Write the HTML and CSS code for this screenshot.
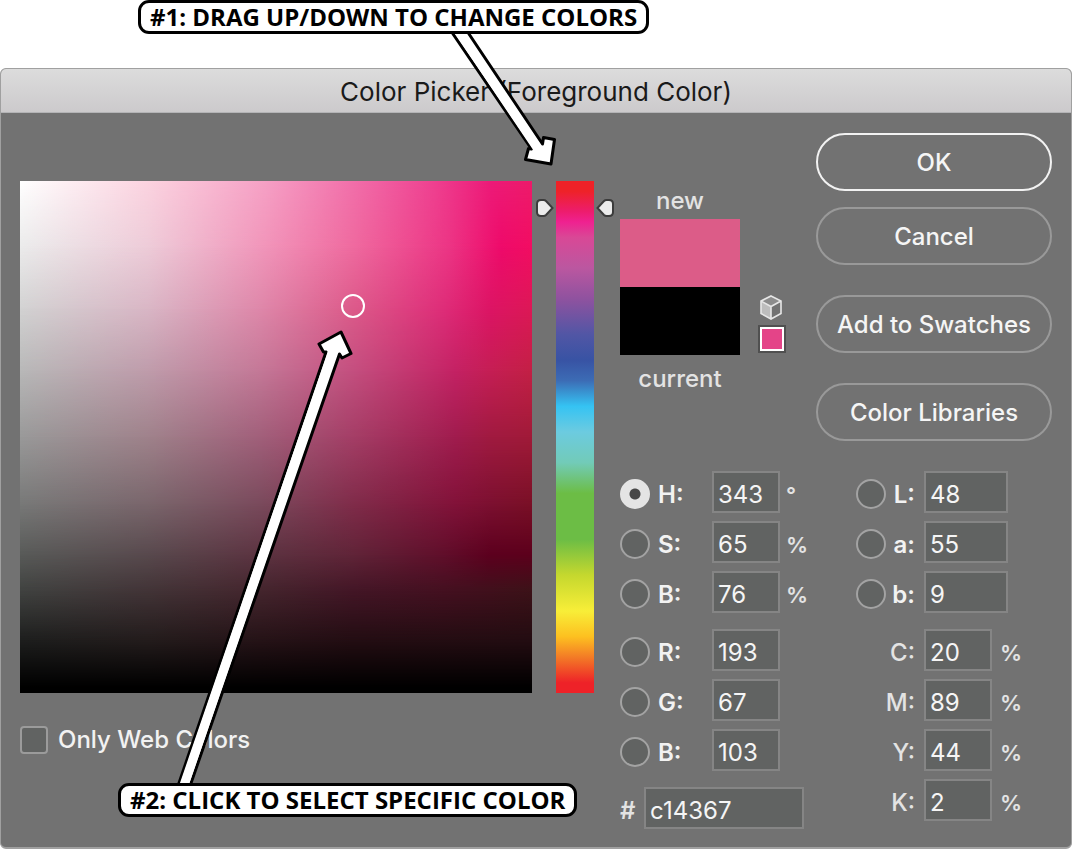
FILE: index.html
```html
<!DOCTYPE html>
<html lang="en">
<head>
  <meta charset="UTF-8">
  <title>Color Picker</title>
  <link rel="stylesheet" href="styles.css">
</head>
<body>
  <div class="callout callout-hue">#1: DRAG UP/DOWN TO CHANGE COLORS</div>

  <main class="dialog">
    <h1 class="titlebar">Color Picker (Foreground Color)</h1>

    <form class="content">
      <section class="spectrum">
        <div class="field">
          <div class="shade shade-0"></div>
          <div class="shade shade-1"></div>
          <div class="shade shade-2"></div>
          <div class="shade shade-3"></div>
          <div class="shade shade-4"></div>
          <div class="shade shade-5"></div>
          <div class="shade shade-6"></div>
          <div class="shade shade-7"></div>
          <div class="shade shade-8"></div>
          <div class="shade shade-9"></div>
          <span class="cursor"></span>
        </div>
        <label class="web-only"><input type="checkbox" class="check">Only Web Colors</label>
        <svg class="arrow arrow-field" width="180" height="460" viewBox="175 328 180 460">
          <path d="M178 786 L326 352 L323.5 352 L319 344 L341 332 L351 353.5 L342 358 L339.5 354 L190 786"/>
          <path class="core" d="M183 788 L334 348"/>
        </svg>
      </section>

      <section class="hue">
        <svg class="marker" width="18" height="20" viewBox="0 0 18 20">
          <path d="M5 1 H7.5 Q9 1 10 2 L16.5 9 L10 16 Q9 17 7.5 17 H5 Q1 17 1 13 V5 Q1 1 5 1Z"/>
        </svg>
        <div class="strip"></div>
        <svg class="marker" width="18" height="20" viewBox="0 0 18 20">
          <path d="M13 1 H10.5 Q9 1 8 2 L1.5 9 L8 16 Q9 17 10.5 17 H13 Q17 17 17 13 V5 Q17 1 13 1Z"/>
        </svg>
      </section>

      <section class="panel">
        <div class="top">
          <div class="preview">
            <span class="caption">new</span>
            <div class="swatches">
              <div class="swatch-new"></div>
              <div class="swatch-current"></div>
            </div>
            <span class="caption">current</span>
          </div>
          <div class="warnings">
            <svg width="24" height="26" viewBox="1 1 24 26">
              <path d="M12 2 L22 7 L12 12.500 L2 7Z" fill="#8c8c8c"/>
              <path d="M2 7 L12 12.5 V25 L2 19.5Z" fill="#bdbdbd"/>
              <path d="M12 2 L22 7 V19.5 L12 25 L2 19.5 V7Z M2 7 L12 12.5 L22 7 M12 12.5 V25" fill="none" stroke="#e6e6e6" stroke-width="1.6"/>
            </svg>
            <span class="web-swatch"></span>
          </div>
          <div class="actions">
            <button type="button" class="primary">OK</button>
            <button type="button">Cancel</button>
            <button type="button" class="spaced">Add to Swatches</button>
            <button type="button" class="spaced">Color Libraries</button>
          </div>
        </div>

        <div class="values">
          <div class="column">
            <div class="group">
              <div class="row"><input type="radio" name="mode" id="mode-h" checked><label for="mode-h">H:</label><input type="text" value="343" aria-label="Hue"><span class="unit">°</span></div>
              <div class="row"><input type="radio" name="mode" id="mode-s"><label for="mode-s">S:</label><input type="text" value="65" aria-label="Saturation"><span class="unit">%</span></div>
              <div class="row"><input type="radio" name="mode" id="mode-v"><label for="mode-v">B:</label><input type="text" value="76" aria-label="Brightness"><span class="unit">%</span></div>
            </div>
            <div class="group">
              <div class="row"><input type="radio" name="mode" id="mode-r"><label for="mode-r">R:</label><input type="text" value="193" aria-label="Red"></div>
              <div class="row"><input type="radio" name="mode" id="mode-g"><label for="mode-g">G:</label><input type="text" value="67" aria-label="Green"></div>
              <div class="row"><input type="radio" name="mode" id="mode-b"><label for="mode-b">B:</label><input type="text" value="103" aria-label="Blue"></div>
            </div>
            <div class="row hex"><label for="hex">#</label><input type="text" id="hex" value="c14367"></div>
          </div>

          <div class="column column-right">
            <div class="group lab">
              <div class="row"><input type="radio" name="mode" id="mode-l"><label for="mode-l">L:</label><input type="text" value="48" aria-label="Lightness"></div>
              <div class="row"><input type="radio" name="mode" id="mode-la"><label for="mode-la">a:</label><input type="text" value="55" aria-label="a"></div>
              <div class="row"><input type="radio" name="mode" id="mode-lb"><label for="mode-lb">b:</label><input type="text" value="9" aria-label="b"></div>
            </div>
            <div class="group cmyk">
              <div class="row"><label for="c">C:</label><input type="text" id="c" value="20"><span class="unit">%</span></div>
              <div class="row"><label for="m">M:</label><input type="text" id="m" value="89"><span class="unit">%</span></div>
              <div class="row"><label for="y">Y:</label><input type="text" id="y" value="44"><span class="unit">%</span></div>
              <div class="row"><label for="k">K:</label><input type="text" id="k" value="2"><span class="unit">%</span></div>
            </div>
          </div>
        </div>
      </section>
    </form>
  </main>

  <svg class="arrow arrow-hue" width="120" height="140" viewBox="445 30 120 140">
    <path d="M451 31 L531.5 149 L528.5 148.5 L525.5 159.5 L551 164 L554.5 139.5 L543.5 137.5 L542.5 144 L467 31"/>
    <path class="core" d="M458 30 L540 152"/>
  </svg>
  <div class="callout callout-field">#2: CLICK TO SELECT SPECIFIC COLOR</div>
</body>
</html>
```

FILE: styles.css
```css
* {
  box-sizing: border-box;
}
body {
  margin: 0;
  position: relative;
  background: #fff;
  color: #f2f2f2;
  font-family: Inter, sans-serif;
  font-size: 24px;
  font-weight: 500;
  line-height: 30px;
}

/* annotations */
.callout {
  position: absolute;
  z-index: 3;
  height: 34px;
  padding: 0 9px;
  border: 3px solid #000;
  border-radius: 11px;
  background: #fff;
  color: #000;
  font-family: "Open Sans", sans-serif;
  font-size: 24px;
  font-weight: 700;
  line-height: 28px;
  white-space: nowrap;
}
.callout-hue {
  left: 138px;
  top: 0;
}
.callout-field {
  left: 118px;
  top: 783px;
}
.arrow {
  position: absolute;
  z-index: 2;
  fill: #fff;
  stroke: #000;
  stroke-width: 3;
  stroke-linejoin: round;
  pointer-events: none;
}
.arrow .core {
  stroke: #fff;
  stroke-width: 9;
}
.arrow-hue {
  left: 445px;
  top: 30px;
}
.arrow-field {
  left: 155px;
  top: 195px;
}

/* window */
.dialog {
  margin-top: 68px;
  border: 1px solid #a0a0a0;
  border-bottom-width: 2px;
  border-radius: 6px;
  background: #727272;
}
.titlebar {
  margin: 0;
  height: 44px;
  border-bottom: 1px solid #b4b4b6;
  border-radius: 5px 5px 0 0;
  background: linear-gradient(#dcdcdc, #cccacc);
  color: #1a1a1a;
  font-size: 26px;
  font-weight: 400;
  line-height: 46px;
  text-align: center;
}
.content {
  display: flex;
  align-items: flex-start;
  padding: 20px 19px 18px;
}

/* saturation / brightness field */
.spectrum {
  position: relative;
  flex: 1;
  padding-top: 48px;
}
.field {
  position: relative;
  aspect-ratio: 1;
}
.shade {
  position: absolute;
  inset: 0;
}
.shade-0 {
  background: linear-gradient(90deg, #fff, #fcd3e0 25%, #f6a0c5 48%, #f26faa 65%, #ef4090 81%, #ed1a78 92%, #ed1b6a);
}
.shade-1 {
  background: linear-gradient(90deg, #ebebeb, #edcbd8 25%, #f194b9 48%, #ef6a9f 65%, #ec3484 84%, #ee0a6a 94%, #f20d62);
  mask-image: linear-gradient(transparent, #000 13%);
}
.shade-2 {
  background: linear-gradient(90deg, #d2d2d2, #d9b6c5 25%, #de87a9 47%, #dc5a8a 65%, #de2c78 83%, #dc1464 92%, #dc1856);
  mask-image: linear-gradient(transparent 13%, #000 25%);
}
.shade-3 {
  background: linear-gradient(90deg, #b8b8b8, #bf9cab 25%, #c47897 47%, #c44f7f 65%, #c42264 85%, #c51e54 92%, #c32045);
  mask-image: linear-gradient(transparent 25%, #000 37%);
}
.shade-4 {
  background: linear-gradient(90deg, #999, #9f828b 25%, #a15f7a 47%, #a43e66 65%, #a01c4e 85%, #a01a40 92%, #a01a38);
  mask-image: linear-gradient(transparent 37%, #000 50%);
}
.shade-5 {
  background: linear-gradient(90deg, #787978, #7a666c 25%, #7a4a5c 47%, #802c4a 65%, #821239 85%, #7c1030 92%, #7a1026);
  mask-image: linear-gradient(transparent 50%, #000 63%);
}
.shade-6 {
  background: linear-gradient(90deg, #585a58, #58494d 25%, #5b3743 43%, #602438 65%, #600e2a 83%, #5c001e 92%, #5c001c);
  mask-image: linear-gradient(transparent 63%, #000 73%);
}
.shade-7 {
  background: linear-gradient(90deg, #404240, #423437 25%, #44252d 47%, #431626 65%, #441020 83%, #40101c 92%, #3c1218);
  mask-image: linear-gradient(transparent 73%, #000 80%);
}
.shade-8 {
  background: linear-gradient(90deg, #1c1d1c, #221b1b 25%, #241216 47%, #220d12 65%, #220c11);
  mask-image: linear-gradient(transparent 80%, #000 90%);
}
.shade-9 {
  background: #000;
  mask-image: linear-gradient(transparent 90%, #000 99%);
}
.cursor {
  position: absolute;
  left: 321px;
  top: 113px;
  width: 24px;
  height: 24px;
  border: 2px solid #fff;
  border-radius: 50%;
}
.web-only {
  display: flex;
  align-items: center;
  gap: 10px;
  margin-top: 32px;
}
.check {
  appearance: none;
  width: 28px;
  height: 28px;
  margin: 0;
  border: 2px solid #9b9b9b;
  border-radius: 4px;
  background: #616362;
}

/* hue slider */
.hue {
  display: flex;
  gap: 2px;
  margin: 48px 6px 0 4px;
}
.marker {
  margin-top: 18px;
  fill: #ececec;
  stroke: #3c3c3c;
  stroke-width: 2;
}
.strip {
  width: 38px;
  height: 512px;
  background: linear-gradient(#ee2228 2%, #ed1c6e 6%, #ef2190 8%, #d94896 11%, #bb57a0 17%, #8f529f 23%, #5156a5 30%, #3853a4 35%, #3c6cb5 39%, #35c3f3 44%, #6ccbe0 49%, #72cbb8 55%, #6cbd45 61%, #6cbd45 70%, #c5d82e 77%, #f8ee38 84%, #fdc020 89%, #f37b26 93%, #ee2228 98%);
}

/* preview, buttons and values */
.panel {
  width: 432px;
}
.top {
  display: flex;
  align-items: flex-start;
}
.preview {
  display: flex;
  flex-direction: column;
  gap: 3px;
  width: 120px;
  padding-top: 53px;
  text-align: center;
}
.caption {
  color: #e3e3e3;
}
.swatches {
  margin-bottom: 6px;
}
.swatch-new,
.swatch-current {
  height: 68px;
}
.swatch-new {
  background: #dc5c88;
}
.swatch-current {
  background: #000;
}
.warnings {
  display: flex;
  flex-direction: column;
  align-items: center;
  gap: 4px;
  width: 28px;
  margin: 162px 0 0 18px;
}
.web-swatch {
  width: 28px;
  height: 28px;
  border: 2px solid #505050;
  background: #e44488;
  box-shadow: inset 0 0 0 2px #fff;
}
.actions {
  flex: 1;
  display: flex;
  flex-direction: column;
  gap: 16px;
  margin-left: 30px;
}
button {
  height: 58px;
  padding: 2px 0 0;
  border: 2px solid #999;
  border-radius: 29px;
  background: none;
  color: #f5f5f5;
  font: inherit;
}
.primary {
  border-color: #f2f2f2;
}
.spaced {
  margin-top: 14px;
}
.values {
  display: flex;
  margin-top: 30px;
}
.column {
  display: flex;
  flex-direction: column;
  gap: 16px;
  width: 236px;
}
.column-right {
  width: 196px;
}
.group {
  display: flex;
  flex-direction: column;
  gap: 8px;
}
.row {
  display: flex;
  align-items: center;
}
.row label {
  width: 62px;
  margin-top: 6px;
  padding-left: 8px;
  font-weight: 600;
}
input[type="radio"] {
  appearance: none;
  width: 30px;
  height: 30px;
  margin: 4px 0 0;
  border: 2px solid #a3a3a3;
  border-radius: 50%;
  background: #616362;
}
input[type="radio"]:checked {
  border-color: #e4e4e4;
  background: radial-gradient(circle, #484848 5px, #e4e4e4 6px);
}
input[type="text"] {
  width: 68px;
  height: 42px;
  padding: 5px 4px 0;
  border: 2px solid #858585;
  border-radius: 0;
  background: #616362;
  color: #f5f5f5;
  font: inherit;
  font-weight: 400;
}
.unit {
  margin-top: 6px;
  padding-left: 6px;
  color: #e3e3e3;
  font-size: 22px;
  font-weight: 600;
}
.row.hex label {
  width: 24px;
  padding: 0;
  color: #e3e3e3;
}
.hex input[type="text"] {
  width: 160px;
}
.column-right .row label {
  width: 38px;
  padding: 0 9px 0 0;
  text-align: right;
}
.lab input[type="text"] {
  width: 84px;
}
.column-right .cmyk label {
  width: 68px;
  color: #e3e3e3;
  font-weight: 500;
}
.cmyk .unit {
  padding-left: 8px;
}
```
